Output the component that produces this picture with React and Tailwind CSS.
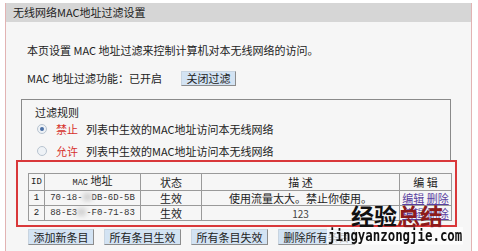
import React from 'react'

const ROWS = [
  { id: 1, mac: ['70-18-', 'DB-6D-5B'], state: '生效', desc: '使用流量太大。禁止你使用。' },
  { id: 2, mac: ['88-E3', '-F0-71-83'], state: '生效', desc: '123' },
]

const BUTTONS = ['添加新条目', '所有条目生效', '所有条目失效', '删除所有条目']

function Radio({ checked }) {
  return (
    <span className="w-[10px] h-[10px] rounded-full border border-[#b8c4d0] bg-[#eef2f6] flex items-center justify-center">
      {checked && <span className="w-[4px] h-[4px] rounded-full bg-[#4a6fa5]" />}
    </span>
  )
}

export default function App() {
  const cell = 'border border-[#9a9a9a] px-0 h-[15px] leading-[13px] whitespace-nowrap overflow-hidden'
  return (
    <div className="relative w-[478px] h-[251px] overflow-hidden bg-white text-[#222] text-[11px]"
         style={{ fontFamily: '"Noto Sans CJK SC", "Liberation Sans", sans-serif' }}>
      <div className="ml-[5px] mt-[3px] w-[467px] h-[260px] border-x border-[#e2b3b3] bg-[#f6f6f6]">
        <div className="h-[19px] bg-[#d6d6d6] pl-[7px] leading-[19px] text-[11px]">无线网络MAC地址过滤设置</div>

        <div className="pl-[21px] pt-[21px] leading-[14px]">本页设置 MAC 地址过滤来控制计算机对本无线网络的访问。</div>

        <div className="pl-[21px] mt-[13px] flex items-center h-[16px]">
          <span>MAC 地址过滤功能：已开启</span>
          <button className="ml-[19px] w-[55px] h-[15px] bg-[#d3e3f3] border border-[#8c8c8c] border-l-[#c8d4e0] border-t-[#c8d4e0] text-[11px] leading-[13px]">关闭过滤</button>
        </div>

        <div className="ml-[15px] mt-[13px] w-[430px] h-[62px] border border-[#8a8a8a] pl-[13px] pt-[5px]">
          <div className="leading-[14px]">过滤规则</div>
          <div className="flex items-center mt-[3px] h-[14px]">
            <span className="ml-[2px]"><Radio checked /></span>
            <span className="ml-[9px] text-[#d6312c]">禁止</span>
            <span className="ml-[8px]">列表中生效的MAC地址访问本无线网络</span>
          </div>
          <div className="flex items-center mt-[8px] h-[14px]">
            <span className="ml-[2px]"><Radio /></span>
            <span className="ml-[9px] text-[#d6312c]">允许</span>
            <span className="ml-[8px]">列表中生效的MAC地址访问本无线网络</span>
          </div>
        </div>

        <table className="ml-[22px] mt-[12px] w-[423px] table-fixed border-collapse border border-[#7a7a7a] text-center">
          <colgroup>
            <col className="w-[16px]" />
            <col className="w-[96px]" />
            <col className="w-[61px]" />
            <col className="w-[198px]" />
            <col className="w-[52px]" />
          </colgroup>
          <thead>
            <tr>
              <th className={`${cell} h-[17px] font-normal font-mono text-[9px]`}>ID</th>
              <th className={`${cell} font-normal`}><span className="font-mono text-[8.5px]">MAC</span> 地址</th>
              <th className={`${cell} font-normal`}>状态</th>
              <th className={`${cell} font-normal`}>描 述</th>
              <th className={`${cell} font-normal`}>编 辑</th>
            </tr>
          </thead>
          <tbody>
            {ROWS.map(r => (
              <tr key={r.id}>
                <td className={`${cell} font-mono text-[9px]`}>{r.id}</td>
                <td className={`${cell} font-mono text-[9px] text-[#333]`}>
                  {r.mac[0]}<span className="inline-block w-[9px] h-[8px] align-middle bg-[#d4d4d4] blur-[2px]" />{r.mac[1]}
                </td>
                <td className={cell}>{r.state}</td>
                <td className={`${cell} ${r.id === 2 ? 'text-[10px] text-[#444]' : ''}`}>{r.desc}</td>
                <td className={`${cell} text-[#5a3fa0]`}>
                  <span className="underline">编辑</span> <span className="underline">删除</span>
                </td>
              </tr>
            ))}
          </tbody>
        </table>

        <div className="ml-[22px] mt-[8px] flex gap-[10px]">
          {BUTTONS.map((b, i) => (
            <button key={b}
                    className={`${i === 0 ? 'w-[66px]' : 'w-[77px]'} h-[16px] bg-[#d3e3f3] border border-[#8c8c8c] border-l-[#c8d4e0] border-t-[#c8d4e0] text-[11px] leading-[14px]`}>
              {b}
            </button>
          ))}
        </div>
      </div>

      {/* red annotation box drawn over the screenshot */}
      <div className="absolute left-[16px] top-[160px] w-[441px] h-[67px] border-2 border-[#d9383a] pointer-events-none" />

      {/* watermark */}
      <div className="absolute left-[351px] top-[202px] text-[23px] font-bold leading-[26px]">
        <span className="text-[#111]">经验</span><span className="text-[#8e1b1b]">总结</span>
      </div>
      <div className="absolute left-[327px] top-[227px] bg-white/70 px-[1px] text-[12.4px] font-bold leading-[14px] text-[#111] scale-y-125 origin-top"
           style={{ fontFamily: '"DejaVu Sans Mono", monospace' }}>
        jingyanzongjie.com
      </div>
    </div>
  )
}
